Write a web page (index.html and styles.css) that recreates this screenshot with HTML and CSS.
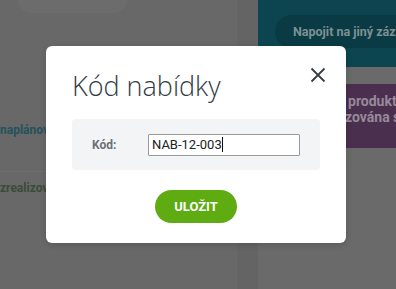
FILE: index.html
```html
<!DOCTYPE html>
<html lang="cs">
<head>
<meta charset="utf-8">
<title>Kód nabídky</title>
<link rel="stylesheet" href="styles.css">
</head>
<body>
<div class="page">
  <div class="left-col">
    <div class="top-card"></div>
    <div class="row row-planned">naplánovaná</div>
    <div class="row row-done">zrealizovaná</div>
  </div>
  <div class="gutter"></div>
  <div class="right-col">
    <div class="teal-panel">
      <div class="pill">Napojit na jiný záznam</div>
    </div>
    <div class="purple-panel">
      <div class="pl1">produktů</div>
      <div class="pl2">zována s</div>
    </div>
  </div>

  <div class="modal">
    <div class="modal-head">
      <h1 class="modal-title">Kód nabídky</h1>
      <svg class="close" width="16" height="16" viewBox="0 0 16 16"><path d="M1.5 1.5 L14.5 14.5 M14.5 1.5 L1.5 14.5" stroke="#373d44" stroke-width="1.8" fill="none"/></svg>
    </div>
    <div class="field-box">
      <label class="field-label">Kód:</label>
      <div class="field-input">NAB-12-003<span class="caret"></span></div>
    </div>
    <div class="actions">
      <button class="save">ULOŽIT</button>
    </div>
  </div>
</div>
</body>
</html>
```

FILE: styles.css
```css
html, body {
  margin: 0;
  padding: 0;
}
body {
  width: 396px;
  height: 289px;
  overflow: hidden;
  font-family: Roboto, "Liberation Sans", sans-serif;
  background: #676767;
}
.page {
  position: relative;
  display: flex;
  width: 396px;
  height: 289px;
  background: #676767;
  overflow: hidden;
}
.left-col {
  flex: 0 0 237px;
  background: #686868;
  display: flex;
  flex-direction: column;
}
.top-card {
  margin-left: 18px;
  width: 109px;
  height: 13px;
  background: #6c6c6c;
  border-radius: 0 0 14px 14px;
}
.row {
  font-size: 12px;
  font-weight: 700;
  white-space: nowrap;
  line-height: 16px;
}
.row-planned {
  margin-top: 109px;
  color: #24525b;
  padding-bottom: 33px;
  border-bottom: 1px solid #6e6e6e;
}
.row-done {
  margin-top: 8px;
  color: #3c4b3a;
}
.gutter {
  flex: 0 0 21px;
  background: #646464;
}
.right-col {
  flex: 1 1 auto;
  min-width: 0;
  overflow: hidden;
  display: flex;
  flex-direction: column;
  background: #6a6a6a;
}
.teal-panel {
  height: 67px;
  background: #0c4550;
  padding: 15px 0 0 17px;
  box-sizing: border-box;
}
.pill {
  height: 33px;
  border-radius: 17px 0 0 17px;
  background: #0a3b44;
  color: #7d9093;
  font-size: 12.5px;
  font-weight: 700;
  line-height: 33px;
  padding-left: 18px;
  white-space: nowrap;
}
.purple-panel {
  margin-top: 17px;
  margin-left: 8px;
  height: 64px;
  background: #4b2f4e;
  color: #978a9b;
  font-size: 14px;
  font-weight: 700;
  line-height: 16px;
  padding-top: 9px;
  box-sizing: border-box;
  white-space: nowrap;
}
.pl1 { padding-left: 82px; }
.pl2 { padding-left: 79px; }

.modal {
  position: absolute;
  left: 46px;
  top: 46px;
  width: 300px;
  height: 197px;
  box-sizing: border-box;
  background: #ffffff;
  border-radius: 6px;
  padding: 0 26px 20px;
  box-shadow: 0 2px 6px rgba(0,0,0,0.15);
}
.modal-head {
  display: flex;
  justify-content: space-between;
  align-items: flex-start;
  height: 73px;
}
.modal-title {
  margin: 22px 0 0;
  font-family: "Open Sans", "Liberation Sans", sans-serif;
  font-weight: 300;
  font-size: 27px;
  line-height: 36px;
  color: #333b45;
}
.close {
  margin-top: 21px;
  margin-right: -6px;
}
.field-box {
  display: flex;
  align-items: center;
  height: 51px;
  background: #f3f4f6;
  border-radius: 4px;
  padding: 0 20px;
}
.field-label {
  width: 56px;
  font-size: 12px;
  font-weight: 700;
  color: #6b7078;
}
.field-input {
  width: 152px;
  height: 22px;
  box-sizing: border-box;
  border: 1px solid #9a9a9a;
  border-radius: 1px;
  background: #fff;
  font-size: 13px;
  line-height: 20px;
  padding-left: 3px;
  color: #222;
}
.caret {
  display: inline-block;
  width: 1px;
  height: 15px;
  background: #111;
  vertical-align: -3px;
}
.actions {
  display: flex;
  justify-content: center;
  margin-top: 20px;
}
.save {
  width: 82px;
  height: 33px;
  border: none;
  border-radius: 17px;
  background: #5eab12;
  color: #fff;
  font-family: Roboto, "Liberation Sans", sans-serif;
  font-weight: 700;
  font-size: 13px;
  padding: 0;
}
```
